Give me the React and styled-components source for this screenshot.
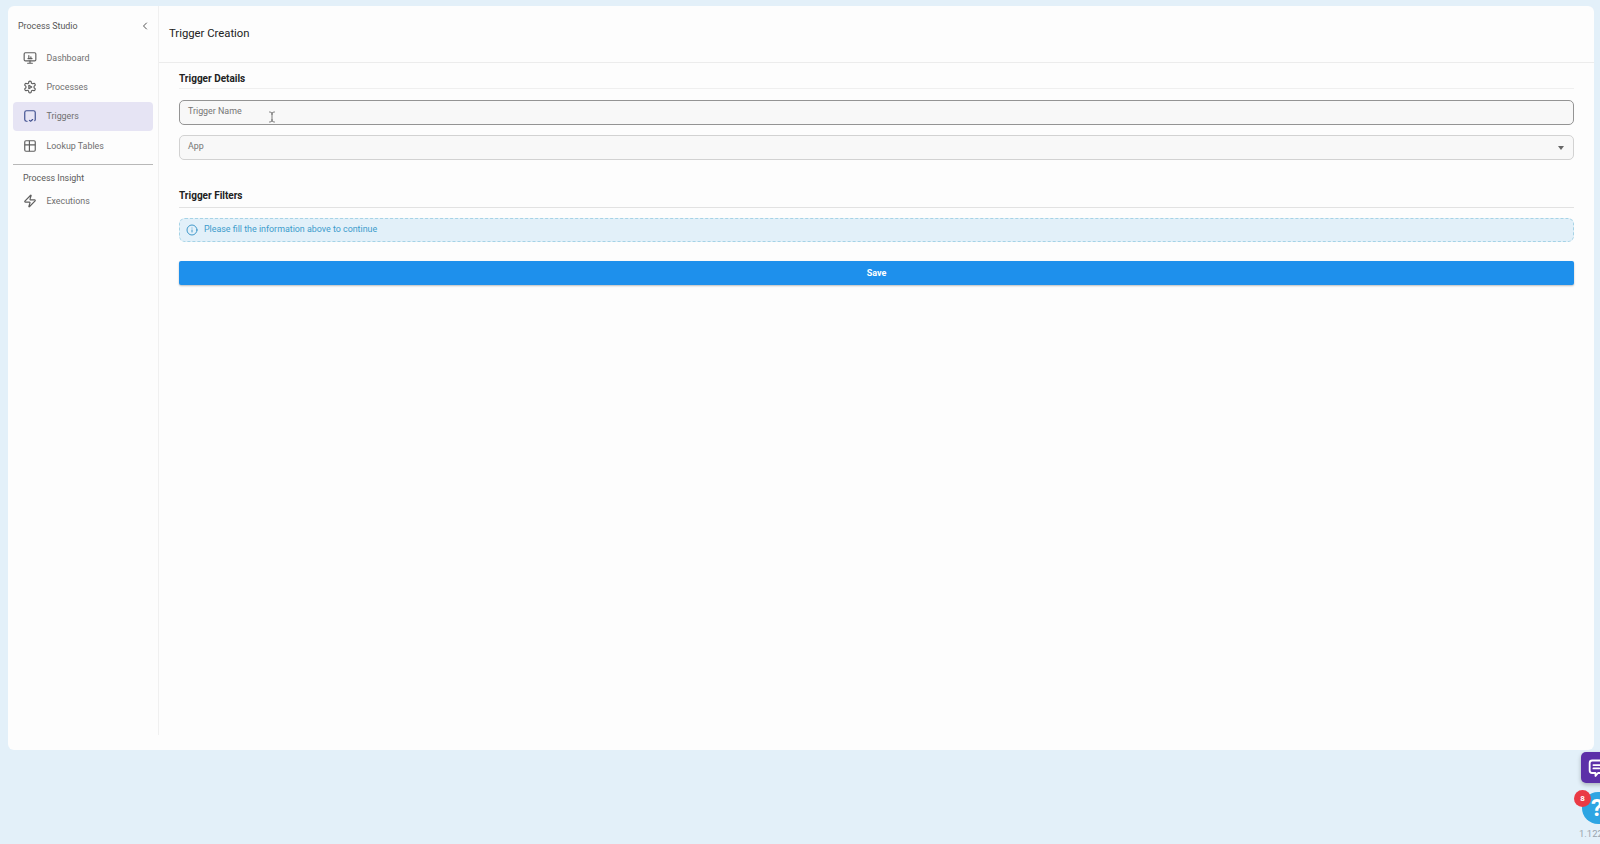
import React from 'react';
import styled, { createGlobalStyle } from 'styled-components';
import { ChevronLeft, Zap, Info, TextCursor } from 'lucide-react';

const GlobalStyle = createGlobalStyle`
  html, body {
    margin: 0;
    height: 100%;
    overflow: hidden;
    background: #e3f0f9;
    font-family: Roboto, "Liberation Sans", sans-serif;
  }
`;

const Page = styled.div`
  position: relative;
  width: 1600px;
  height: 844px;
  padding: 6px 6px 94px 8px;
  box-sizing: border-box;
  overflow: hidden;
`;

const Card = styled.div`
  display: flex;
  height: 100%;
  background: #fdfdfd;
  border-radius: 6px;
  padding-bottom: 15px;
  box-sizing: border-box;
`;

const Sidebar = styled.aside`
  width: 151px;
  flex-shrink: 0;
  box-sizing: border-box;
  border-right: 1px solid #f0f0f0;
  padding: 0 5px;
`;

const SideHead = styled.div`
  display: flex;
  align-items: center;
  justify-content: space-between;
  height: 37px;
  box-sizing: border-box;
  padding: 2px 2px 0 5px;
  color: #555;
  font-size: 8.9px;
  svg { color: #555; }
`;

const NavItem = styled.div`
  display: flex;
  align-items: center;
  gap: 9.5px;
  height: 29px;
  margin-bottom: ${(p) => (p.$tight ? 0 : '0.4px')};
  padding-left: 10px;
  border-radius: 4px;
  background: ${(p) => (p.$active ? '#e6e4f4' : 'transparent')};
  color: #6f6f6f;
  font-size: 8.9px;
  svg { flex-shrink: 0; color: ${(p) => (p.$active ? '#3f4f8f' : '#5f5f5f')}; }
`;

const SideRule = styled.hr`
  border: none;
  border-top: 1px solid #b8b8b8;
  margin: 4px 0 0;
`;

const GroupLabel = styled.div`
  padding: 8px 0 0 10px;
  height: 13px;
  color: #5a5a5a;
  font-size: 8.9px;
`;

const Main = styled.main`
  flex: 1;
  min-width: 0;
`;

const Header = styled.header`
  display: flex;
  align-items: center;
  height: 57px;
  padding: 0 0 2px 10px;
  box-sizing: border-box;
  border-bottom: 1px solid #ececec;
  color: #222;
  font-size: 11.3px;
`;

const Content = styled.div`
  padding: 7px 20px 0 20px;
`;

const SectionTitle = styled.h2`
  margin: 0;
  height: ${(p) => (p.$strong ? 20 : 18)}px;
  line-height: 18px;
  border-bottom: 1px solid ${(p) => (p.$strong ? '#e2e2e2' : '#efefef')};
  color: #222;
  font-size: 10px;
  font-weight: 700;
`;

const Field = styled.div`
  display: flex;
  align-items: center;
  justify-content: space-between;
  height: 25px;
  box-sizing: border-box;
  margin-top: ${(p) => p.$top}px;
  padding: 0 9px 0 8px;
  background: #f8f8f8;
  border: 1px solid ${(p) => (p.$focus ? '#949494' : '#d2d2d2')};
  border-radius: 5px;
  color: #757575;
  font-size: 8.9px;
`;

const FieldLabel = styled.span`
  position: relative;
  top: ${(p) => p.$lift}px;
`;

const Caret = styled.span`
  width: 0;
  height: 0;
  border-left: 3.5px solid transparent;
  border-right: 3.5px solid transparent;
  border-top: 4px solid #666;
`;

const Spacer = styled.div`
  height: 27px;
`;

const Alert = styled.div`
  display: flex;
  align-items: center;
  gap: 6.5px;
  height: 24px;
  box-sizing: border-box;
  margin-top: 10px;
  padding: 0 0 2px 5.5px;
  background: #e2f0f9;
  border: 1px dashed #a6d3e6;
  border-radius: 6px;
  color: #3d9ccc;
  font-size: 8.9px;
`;

const AlertIcon = styled(Info)`
  position: relative;
  top: 1px;
  color: #2f8fc4;
`;

const SaveButton = styled.button`
  display: block;
  width: 100%;
  height: 24px;
  margin-top: 19px;
  border: none;
  border-radius: 2px;
  background: #1e90ec;
  box-shadow: 0 1px 2px rgba(0, 0, 0, 0.25);
  color: #fff;
  font-family: inherit;
  font-size: 9px;
  font-weight: 700;
`;

const MouseCursor = styled.div`
  position: absolute;
  left: 266px;
  top: 108px;
  color: #555;
`;

const ChatButton = styled.div`
  position: absolute;
  left: 1581px;
  top: 752px;
  width: 40px;
  height: 31px;
  display: flex;
  align-items: center;
  padding-left: 7px;
  box-sizing: border-box;
  border-radius: 5px;
  background: #5c30a8;
  box-shadow: 0 2px 4px rgba(0, 0, 0, 0.25);
  color: #fff;
`;

const HelpButton = styled.div`
  position: absolute;
  left: 1582px;
  top: 792px;
  width: 32px;
  height: 32px;
  display: flex;
  align-items: center;
  padding-left: 9px;
  box-sizing: border-box;
  border-radius: 50%;
  background: #2da5e3;
  color: #fff;
  font-size: 24px;
  font-weight: 700;
`;

const Badge = styled.div`
  position: absolute;
  left: 1574px;
  top: 790px;
  width: 17px;
  height: 17px;
  display: flex;
  align-items: center;
  justify-content: center;
  border-radius: 50%;
  background: #ea3a45;
  color: #fff;
  font-size: 8px;
  font-weight: 700;
`;

const Version = styled.div`
  position: absolute;
  left: 1579px;
  top: 828px;
  color: #9aa5ae;
  font-size: 9.5px;
  white-space: nowrap;
`;

const DashboardIcon = () => (
  <svg width="14" height="14" viewBox="0 0 24 24" fill="none" stroke="currentColor" strokeWidth="2" strokeLinecap="round" strokeLinejoin="round">
    <rect x="2" y="3" width="20" height="14" rx="2" />
    <path d="M8 21h8M12 17v4M8.500 13h7M10 13V8M13.500 13v-3" />
  </svg>
);

const ProcessIcon = () => (
  <svg width="14" height="14" viewBox="0 0 24 24" fill="none" stroke="currentColor" strokeWidth="2" strokeLinecap="round" strokeLinejoin="round">
    <path d="M12.220 2h-.440a2 2 0 0 0-2 2v.180a2 2 0 0 1-1 1.730l-.430.250a2 2 0 0 1-2 0l-.150-.080a2 2 0 0 0-2.730.730l-.220.380a2 2 0 0 0 .730 2.730l.150.100a2 2 0 0 1 1 1.720v.510a2 2 0 0 1-1 1.740l-.150.090a2 2 0 0 0-.730 2.730l.220.380a2 2 0 0 0 2.730.730l.150-.080a2 2 0 0 1 2 0l.430.250a2 2 0 0 1 1 1.730V20a2 2 0 0 0 2 2h.440a2 2 0 0 0 2-2v-.180a2 2 0 0 1 1-1.730l.430-.250a2 2 0 0 1 2 0l.150.080a2 2 0 0 0 2.730-.730l.220-.390a2 2 0 0 0-.730-2.730l-.150-.080a2 2 0 0 1-1-1.740v-.500a2 2 0 0 1 1-1.740l.150-.090a2 2 0 0 0 .730-2.730l-.220-.380a2 2 0 0 0-2.730-.730l-.150.080a2 2 0 0 1-2 0l-.430-.250a2 2 0 0 1-1-1.730V4a2 2 0 0 0-2-2z" />
    <path d="M10 9v6l5-3z" />
  </svg>
);

const TriggerIcon = () => (
  <svg width="14" height="14" viewBox="0 0 24 24" fill="none" stroke="currentColor" strokeWidth="2" strokeLinecap="round" strokeLinejoin="round">
    <path d="M7 21H6a3 3 0 0 1-3-3V6a3 3 0 0 1 3-3h12a3 3 0 0 1 3 3v12a3 3 0 0 1-.800 2" />
    <path d="M11 19.500l2 1.500 3.500-3" />
  </svg>
);

const TableIcon = () => (
  <svg width="14" height="14" viewBox="0 0 24 24" fill="none" stroke="currentColor" strokeWidth="2" strokeLinejoin="round">
    <rect x="3" y="3" width="18" height="18" rx="2" />
    <path d="M3 10h18M11 3v18" />
  </svg>
);

const ChatIcon = () => (
  <svg width="20" height="20" viewBox="0 0 24 24" fill="none" stroke="currentColor" strokeWidth="2.200" strokeLinecap="round" strokeLinejoin="round">
    <path d="M5 3h14a3 3 0 0 1 3 3v9a3 3 0 0 1-3 3h-7l-3 3.500V18H5a3 3 0 0 1-3-3V6a3 3 0 0 1 3-3z" />
    <path d="M6.500 8.500h11M6.500 12.500h7" />
  </svg>
);

function App() {
  return (
    <Page>
      <GlobalStyle />
      <Card>
        <Sidebar>
          <SideHead>
            Process Studio
            <ChevronLeft size={12} strokeWidth={2} />
          </SideHead>
          <NavItem><DashboardIcon />Dashboard</NavItem>
          <NavItem><ProcessIcon />Processes</NavItem>
          <NavItem $active><TriggerIcon />Triggers</NavItem>
          <NavItem><TableIcon />Lookup Tables</NavItem>
          <SideRule />
          <GroupLabel>Process Insight</GroupLabel>
          <NavItem $tight><Zap size={14} strokeWidth={2} />Executions</NavItem>
        </Sidebar>
        <Main>
          <Header>Trigger Creation</Header>
          <Content>
            <SectionTitle>Trigger Details</SectionTitle>
            <Field $top={11} $focus><FieldLabel $lift={-1.5}>Trigger Name</FieldLabel></Field>
            <Field $top={10}>
              <FieldLabel $lift={-1.5}>App</FieldLabel>
              <Caret />
            </Field>
            <Spacer />
            <SectionTitle $strong>Trigger Filters</SectionTitle>
            <Alert>
              <AlertIcon size={12} strokeWidth={1.8} />
              Please fill the information above to continue
            </Alert>
            <SaveButton>Save</SaveButton>
          </Content>
        </Main>
      </Card>
      <MouseCursor><TextCursor size={12} strokeWidth={1.5} /></MouseCursor>
      <ChatButton><ChatIcon /></ChatButton>
      <HelpButton>?</HelpButton>
      <Badge>8</Badge>
      <Version>1.122</Version>
    </Page>
  );
}

export default App;
